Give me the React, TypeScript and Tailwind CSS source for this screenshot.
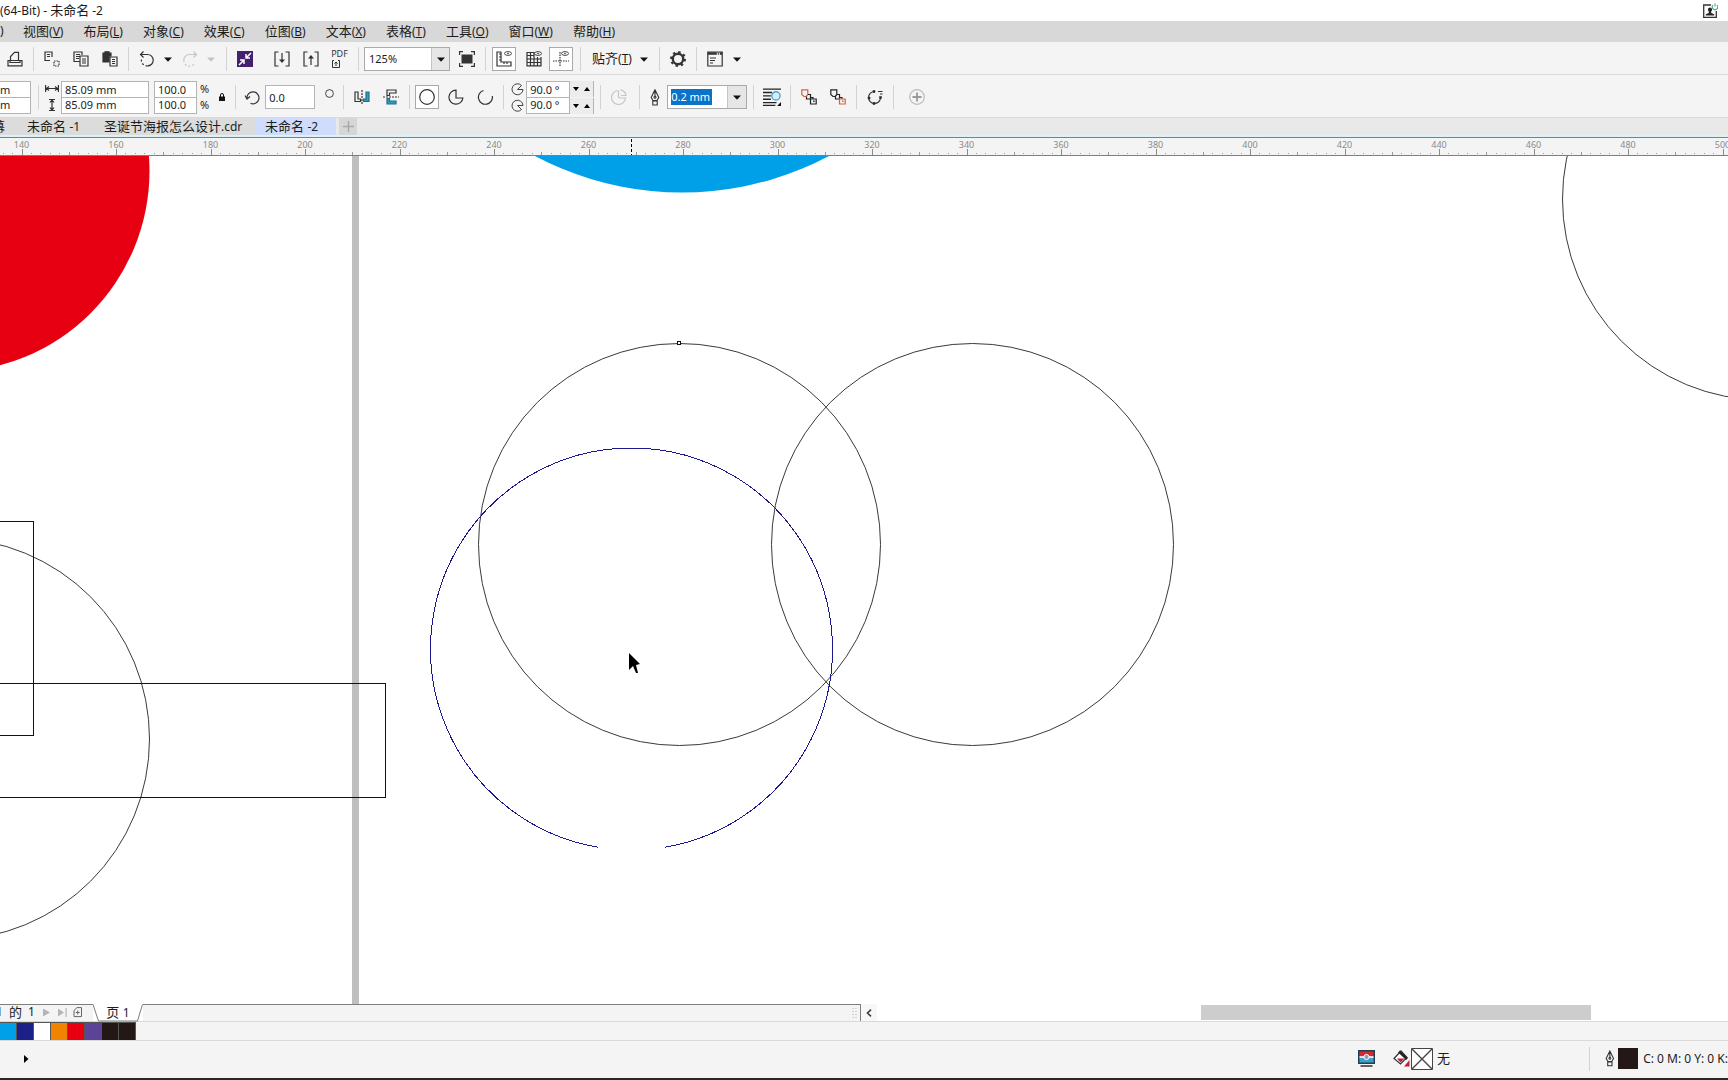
/**
 * Vector drawing workspace: title, menus, toolbars, ruler, canvas, page tabs, palette, status.
 */

import type React from "react";

// ─── Shared bits ──────────────────────────────────────────────────────────────
const Sep: React.FC = () => (
  <div className="w-2 h-6 shrink-0 flex justify-center">
    <div className="w-px h-full bg-[#d2d2d2]" />
  </div>
);

const Caret: React.FC<{ muted?: boolean }> = ({ muted }) => (
  <svg width="8" height="5" viewBox="0 0 8 5" className={muted ? "text-[#c4c4c4]" : "text-[#111]"}>
    <path d="M0 0.5h8L4 4.8z" fill="currentColor" />
  </svg>
);

const CaretButton: React.FC<{ label: string; muted?: boolean }> = ({ label, muted }) => (
  <button type="button" aria-label={label} className="w-[14px] h-6 shrink-0 flex items-center justify-center">
    <Caret muted={muted} />
  </button>
);

interface ToolProps {
  label: string;
  boxed?: boolean;
  muted?: boolean;
  size?: number;
  children: React.ReactNode;
}

const Tool: React.FC<ToolProps> = ({ label, boxed, muted, size = 16, children }) => (
  <button
    type="button"
    aria-label={label}
    className={`h-6 shrink-0 flex items-center justify-center ${
      boxed ? "w-6 bg-white border border-[#a9a9a9]" : "w-[29px]"
    } ${muted ? "text-[#c6c6c6]" : "text-[#333]"}`}
  >
    <svg
      width={size}
      height={size}
      viewBox="0 0 16 16"
      fill="none"
      stroke="currentColor"
      strokeWidth="1.2"
      className="shrink-0"
    >
      {children}
    </svg>
  </button>
);

const EyeMark: React.FC = () => (
  <>
    <ellipse cx="12" cy="2.5" rx="3.5" ry="1.9" strokeWidth="0.9" />
    <circle cx="12" cy="2.5" r="0.8" fill="currentColor" stroke="none" />
  </>
);

const PenIcon: React.FC = () => (
  <svg width="10" height="17" viewBox="0 0 10 17" fill="none" stroke="#333" strokeWidth="1.1">
    <path d="M5 0.8 1.2 8.5 3 11.5h4l1.8-3zM5 1v6.5M2.8 12h4.4v4H2.8z" />
    <circle cx="5" cy="8.3" r="1" />
  </svg>
);

// ─── Title + menu ─────────────────────────────────────────────────────────────
const MENUS = [
  ["视图", "V"],
  ["布局", "L"],
  ["对象", "C"],
  ["效果", "C"],
  ["位图", "B"],
  ["文本", "X"],
  ["表格", "T"],
  ["工具", "O"],
  ["窗口", "W"],
  ["帮助", "H"],
];

const TitleBar: React.FC = () => (
  <header className="h-[21px] shrink-0 flex items-center justify-between bg-white pr-[10px]">
    <h1 className="whitespace-nowrap text-[13px]">
      <span className="text-xs">(64-Bit) - </span>未命名<span className="text-xs"> -2</span>
    </h1>
    <button type="button" aria-label="账户" className="flex">
      <svg width="16" height="16" viewBox="0 0 16 16" fill="none">
        <path d="M9 2H1.7v12.3h12.6V8" stroke="#333" strokeWidth="1.3" />
        <path d="M8 4.5a2.2 2.2 0 0 1 1.2 4v1.6l3 1.2v1.3H3.8v-1.3l3-1.2V8.5A2.2 2.2 0 0 1 8 4.5z" fill="#222" />
        <path d="M11 2.2a2.7 2.7 0 1 0 4 0M13 0.5v3" stroke="#4fa37c" strokeWidth="1.1" />
      </svg>
    </button>
  </header>
);

const MenuBar: React.FC = () => (
  <nav className="h-[21px] shrink-0 flex items-center gap-5 pb-0.5 bg-[#d8d8d8] whitespace-nowrap">
    <span className="w-[3px] text-xs">)</span>
    {MENUS.map(([name, key]) => (
      <button type="button" key={name} className="text-[13px] leading-5">
        {name}
        <span className="text-xs">
          (<span className="underline">{key}</span>)
        </span>
      </button>
    ))}
  </nav>
);

// ─── Standard toolbar ─────────────────────────────────────────────────────────
const StandardBar: React.FC = () => (
  <div className="h-[33px] shrink-0 flex items-center pt-0.5 bg-[#f4f4f4] border-b border-[#d9d9d9]">
    <Tool label="打印">
      <path d="M3.5 9V5.5l4-4.2h4V9M1 9.5h14v5.3H1zM3 9.5v2h10v-2" />
    </Tool>
    <Sep />
    <Tool label="剪切">
      <path d="M6 9.5H1V1h7v5M3 3.5h3M3 5.5h3" />
      <path d="M10 10h5v5h-5z" strokeDasharray="1.5 1" />
    </Tool>
    <Tool label="复制">
      <path d="M7 10.5H1V1h8v3M3 3.5h4M3 5.5h4M3 7.5h3M7 5h8v10H7zM9 8h4M9 10h4M9 12h4" />
    </Tool>
    <Tool label="粘贴">
      <path d="M7 11H1V2h2V0.8h4V2h2v3H7z" fill="currentColor" />
      <path d="M8 6h7v9H8zM10 8.5h3M10 10.5h3M10 12.5h3" />
    </Tool>
    <Sep />
    <Tool label="撤销">
      <path d="M4.500 0.500 1.500 3.500l3 3M2 3.500h6.500a5.700 5.700 0 0 1 0 11.400" />
      <path d="M8.500 14.900A5.700 5.700 0 0 1 2.500 8" strokeDasharray="2 2" />
    </Tool>
    <CaretButton label="撤销列表" />
    <Tool label="重做" muted>
      <path d="M11.500 0.500l3 3-3 3M14 3.500H7.500a5.700 5.700 0 0 0-5.700 5.700" />
      <path d="M1.800 9.200A5.700 5.700 0 0 0 12 13" strokeDasharray="2 2" />
    </Tool>
    <CaretButton label="重做列表" muted />
    <span className="w-1" />
    <Sep />
    <Tool label="搜索内容">
      <path d="M0 0h16v16H0z" fill="#45206f" stroke="none" />
      <path d="M14 2 9.500 6.500M9 3v4h4M2 14l4.500-4.500M7 13V9H3" stroke="#fff" strokeWidth="1.500" />
    </Tool>
    <span className="w-2" />
    <Tool label="导入">
      <path d="M4.500 1H1v14h3.500M11.500 1H15v14h-3.500M8 2v9" />
      <path d="M5 8.500h6L8 12z" fill="currentColor" stroke="none" />
    </Tool>
    <Tool label="导出">
      <path d="M4.500 1H1v14h3.500M11.500 1H15v14h-3.500M8 5v9" />
      <path d="M5 7.500h6L8 4z" fill="currentColor" stroke="none" />
    </Tool>
    <button type="button" className="w-[29px] h-6 shrink-0 flex flex-col items-center pt-0.5 text-[#333]">
      <span className="text-[9px] leading-[10px]">PDF</span>
      <svg width="8" height="8" viewBox="0 0 8 8" fill="none" stroke="currentColor" className="mr-2 mt-px">
        <path d="M2 0.500H0.500v7h7v-7H6M4 6V2M2.500 3.500 4 2l1.500 1.500" />
      </svg>
    </button>
    <Sep />
    <div className="relative flex shrink-0 mx-[2px]">
      <select
        aria-label="缩放级别"
        className="appearance-none w-[86px] h-6 pl-1 bg-white border border-[#a9a9a9] text-[11px] leading-5"
      >
        <option>125%</option>
      </select>
      <span className="absolute right-px inset-y-px w-[18px] bg-[#e6e6e6] border-l border-[#c4c4c4] flex items-center justify-center pointer-events-none">
        <Caret />
      </span>
    </div>
    <Tool label="全屏预览">
      <path d="M0.600 4V0.600H4M12 0.600h3.400V4M15.400 12v3.400H12M4 15.400H0.600V12" />
      <path d="M2.500 3.500h11v9h-11z" fill="currentColor" stroke="none" />
    </Tool>
    <Sep />
    <div className="flex items-center gap-px mx-[3px]">
      <Tool label="显示标尺" boxed>
        <path d="M1 1v14h14v-4H5V1zM3 3h2M3 6h2M3 9h2M8 13v-2M11 13v-2" />
        <EyeMark />
      </Tool>
      <span className="w-px" />
      <Tool label="显示网格">
        <path d="M1 1v14M4.500 1v14M8 1v14M11.500 6v9M15 6v9M0.500 1.500H8M0.500 4.500H8M0.500 8h15M0.500 11.500h15M0.500 14.800h15" />
        <EyeMark />
      </Tool>
      <Tool label="显示辅助线" boxed>
        <path d="M0 10h16M7 1v15" strokeDasharray="1.500 1" />
        <EyeMark />
      </Tool>
    </div>
    <Sep />
    <button type="button" className="flex items-center gap-2 pl-2 pr-2 text-[13px] whitespace-nowrap">
      <span>
        贴齐
        <span className="text-xs">
          (<span className="underline">T</span>)
        </span>
      </span>
      <Caret />
    </button>
    <Sep />
    <Tool label="选项">
      <circle cx="8" cy="8" r="5.200" strokeWidth="2.400" />
      <circle cx="8" cy="8" r="7" strokeWidth="2" strokeDasharray="2.400 3.100" />
    </Tool>
    <Sep />
    <Tool label="应用程序启动器">
      <path d="M0.800 1h14.400v14H0.800zM3 7h6M3 9.500h5M3 12h3" />
      <path d="M0.800 2.500h14.400" strokeWidth="2.400" strokeDasharray="9 1 1 1" />
    </Tool>
    <CaretButton label="启动器列表" />
  </div>
);

// ─── Property bar ─────────────────────────────────────────────────────────────
interface FieldProps {
  label: string;
  value: string;
  className: string;
}

const Field: React.FC<FieldProps> = ({ label, value, className }) => (
  <input aria-label={label} defaultValue={value} className={`bg-white border border-[#b4b4b4] text-[11px] ${className}`} />
);

const Spinner: React.FC<{ label: string }> = ({ label }) => (
  <div className="flex h-4 w-6 bg-[#ececec] border-r border-[#b4b4b4]">
    <button type="button" aria-label={`${label}减小`} className="w-3 flex items-center justify-center">
      <svg width="6" height="4" viewBox="0 0 6 4">
        <path d="M0 0h6L3 4z" />
      </svg>
    </button>
    <button type="button" aria-label={`${label}增大`} className="w-3 flex items-center justify-center">
      <svg width="6" height="4" viewBox="0 0 6 4">
        <path d="M0 4h6L3 0z" />
      </svg>
    </button>
  </div>
);

const PropertyBar: React.FC = () => (
  <div className="h-[43px] shrink-0 flex items-center pt-0.5 bg-[#f4f4f4] border-b border-[#d9d9d9]">
    <div className="flex flex-col">
      <Field label="X 位置" value="m" className="w-[31px] h-[17px] border-l-0" />
      <Field label="Y 位置" value="m" className="w-[31px] h-4 border-l-0 border-t-0" />
    </div>
    <span className="w-[3px]" />
    <Sep />
    <svg width="14" height="32" viewBox="0 0 14 32" fill="none" stroke="#333" strokeWidth="1.2" className="ml-[3px] mr-[2px]">
      <path d="M0.600 4v7M13.400 4v7M1 7.500h12M4 5.500l-2.500 2L4 9.500M10 5.500l2.500 2-2.500 2" />
      <path d="M4 18.500h6M4 29.500h6M7 18.500v11M5 21.500l2-2.500 2 2.500M5 26.500l2 2.500 2-2.500" />
    </svg>
    <div className="flex flex-col">
      <Field label="对象宽度" value="85.09 mm" className="w-[88px] h-[17px] pl-[3px]" />
      <Field label="对象高度" value="85.09 mm" className="w-[88px] h-4 pl-[3px] border-t-0" />
    </div>
    <div className="flex flex-col ml-[5px]">
      <Field label="水平缩放" value="100.0" className="w-[43px] h-[17px] pl-[3px]" />
      <Field label="垂直缩放" value="100.0" className="w-[43px] h-4 pl-[3px] border-t-0" />
    </div>
    <div className="flex flex-col ml-[3px] text-[11px] leading-4">
      <span>%</span>
      <span>%</span>
    </div>
    <button type="button" aria-label="锁定比率" className="w-[19px] h-6 ml-[3px] flex items-center justify-center">
      <svg width="6" height="8" viewBox="0 0 6 8">
        <path d="M1.500 4V2a1.500 1.500 0 0 1 3 0v2" fill="none" stroke="#111" />
        <path d="M0 3.500h6V8H0z" fill="#111" />
      </svg>
    </button>
    <Sep />
    <div className="w-[26px] flex justify-center">
      <Tool label="旋转">
        <path d="M1 6.500 3 10l3-2.500M3 9.500a6 6 0 1 1 3.500 4.800" />
      </Tool>
    </div>
    <Field label="旋转角度" value="0.0" className="w-[50px] h-6 pl-[3px]" />
    <span className="w-6 h-6 flex justify-center pt-1">
      <svg width="9" height="9" viewBox="0 0 9 9" fill="none" stroke="#444" className="ml-1">
        <circle cx="4.500" cy="4.500" r="3.900" />
      </svg>
    </span>
    <Sep />
    <Tool label="水平镜像">
      <path d="M1 3v9.500h5.500V10H4V3z" />
      <path d="M8 1v14" strokeDasharray="2 1" />
      <path d="M15 3v9.500H9.500V10H12V3z" fill="#2f9cc0" stroke="#236f8a" />
    </Tool>
    <Tool label="垂直镜像">
      <path d="M13 1H4v5.500h2.500v-2.500H13z" />
      <path d="M0 8h16" strokeDasharray="2 1" />
      <path d="M13 15H4V9.500h2.500V12H13z" fill="#2f9cc0" stroke="#236f8a" />
    </Tool>
    <Sep />
    <span className="w-[2px]" />
    <Tool label="椭圆形" boxed>
      <circle cx="8" cy="8" r="7.300" />
    </Tool>
    <span className="w-[2px]" />
    <Tool label="饼形">
      <path d="M8 1.200A7 7 0 1 0 14.900 9H8z" />
    </Tool>
    <Tool label="弧形">
      <path d="M6.500 1.500a7 7 0 1 0 8.800 5.500" />
    </Tool>
    <Sep />
    <div className="flex flex-col gap-[3px] ml-1 mr-[2px]">
      <svg width="13" height="13" viewBox="0 0 13 13" fill="none" stroke="#444">
        <path d="M10.500 2.500A5.500 5.500 0 1 0 12 6.500H6.500l4-4" />
      </svg>
      <svg width="13" height="13" viewBox="0 0 13 13" fill="none" stroke="#444">
        <path d="M10.500 10.500A5.500 5.500 0 1 1 12 6.500H6.500l4 4" />
      </svg>
    </div>
    <div className="flex flex-col">
      <div className="flex">
        <Field label="起始角度" value="90.0 °" className="w-[44px] h-[17px] pl-[3px]" />
        <Spinner label="起始角度" />
      </div>
      <div className="flex">
        <Field label="结束角度" value="90.0 °" className="w-[44px] h-4 pl-[3px] border-t-0" />
        <Spinner label="结束角度" />
      </div>
    </div>
    <span className="w-[2px]" />
    <Sep />
    <Tool label="更改方向" muted>
      <path d="M7 1.500a7 7 0 1 0 7.500 7.500H8M7.500 1.500V9M9.500 0.800A6.500 6.500 0 0 1 15 6.500h-5" />
    </Tool>
    <span className="w-[2px]" />
    <Sep />
    <span className="w-6 flex justify-center">
      <PenIcon />
    </span>
    <div className="flex h-6 w-20 shrink-0 bg-white border border-[#a9a9a9] items-center pl-[3px]">
      <input
        aria-label="轮廓宽度"
        defaultValue="0.2 mm"
        className="w-[41px] h-4 bg-[#0b72c9] text-white text-[11px]"
      />
      <button
        type="button"
        aria-label="轮廓宽度列表"
        className="ml-auto w-[19px] h-full bg-[#e6e6e6] border-l border-[#c4c4c4] flex items-center justify-center"
      >
        <Caret />
      </button>
    </div>
    <span className="w-[2px]" />
    <Sep />
    <Tool label="文本换行" size={18}>
      <path d="M0 1h16M0 4h8M0 7h7M0 10h7M0 13h12M0 15.500h11" stroke="#222" />
      <circle cx="11.500" cy="7" r="3.700" fill="#d5eefa" stroke="#4aa3d0" />
      <path d="M16.500 12v4.500H12z" fill="#111" stroke="none" />
    </Tool>
    <Sep />
    <Tool label="到图层前面">
      <path d="M0.800 0.800h6v5L5 7.500H3L0.800 5.500z" stroke="#d9623b" />
      <path d="M7 5.500h2.500v3M5.500 7.500V10h4V8.500H12V10M9.500 10h5.700v5H9.500zM12 12h1v1" stroke="#222" />
    </Tool>
    <Tool label="到图层后面">
      <path d="M0.800 0.800h6v5L5 7.500H3L0.800 5.500zM7 5.500h2.500v3M5.500 7.500V10h4V8.500H12V10" stroke="#222" />
      <path d="M9.500 10h5.700v5H9.500zM12 12h1v1" stroke="#d9623b" />
    </Tool>
    <Sep />
    <Tool label="转换为曲线">
      <path d="M11 2.500h4.500M13 5h2.500M7 2.500a6 6 0 1 0 6.500 7" />
      <path d="M6 1.500h2v2H6zM1 8h2v2H1zM6 13.500h2v2H6zM12.500 7.500h2v2h-2z" fill="#222" strokeWidth="0.600" />
    </Tool>
    <Sep />
    <span className="w-[5px]" />
    <Tool label="添加" muted>
      <circle cx="8" cy="8" r="7.300" stroke="#bbb" />
      <path d="M8 3.500v9M3.500 8h9" stroke="#999" strokeWidth="1.800" />
    </Tool>
  </div>
);

// ─── Document tabs ────────────────────────────────────────────────────────────
const DocumentTabs: React.FC = () => (
  <div className="h-5 shrink-0 bg-[#d9f3f8] border-b border-[#3f95b5]">
    <div className="h-[17px] flex bg-[#e9e9e9] text-[13px] leading-4 whitespace-nowrap">
      <button type="button" className="w-[18px] bg-[#dcdcdc] overflow-hidden flex justify-start">
        <span className="-ml-2">幕</span>
      </button>
      <button type="button" className="w-[78px] bg-[#dcdcdc] pl-[9px] text-left">
        未命名 <span className="text-xs">-1</span>
      </button>
      <button type="button" className="w-[160px] bg-[#dcdcdc] pl-2 text-left">
        圣诞节海报怎么设计<span className="text-xs">.cdr</span>
      </button>
      <button type="button" className="w-20 bg-[#cfdcfb] pl-[9px] text-left">
        未命名 <span className="text-xs">-2</span>
      </button>
      <button
        type="button"
        aria-label="新建文档"
        className="w-[18px] ml-[3px] bg-[#d6d6d6] flex items-center justify-center"
      >
        <svg width="11" height="11" viewBox="0 0 11 11" stroke="#aaa" strokeWidth="1.500">
          <path d="M5.500 0v11M0 5.500h11" />
        </svg>
      </button>
    </div>
  </div>
);

// ─── Ruler ────────────────────────────────────────────────────────────────────
const RULER_START = 21.5;
const RULER_STEP = 94.5;
const MAJORS = Array.from({ length: 19 }, (_, i) => ({ x: RULER_START + i * RULER_STEP, value: 140 + i * 20 }));
const MINORS = Array.from({ length: 183 }, (_, i) => i - 2);

const Ruler: React.FC = () => (
  <svg className="block w-full h-[18px] shrink-0 bg-[#f4f4f4]" shapeRendering="crispEdges">
    <path d="M0 17.500h3000" stroke="#7d7d7d" />
    {MINORS.map((i) => (
      <rect
        key={i}
        x={RULER_START + (i * RULER_STEP) / 10}
        y={i % 5 === 0 ? 14 : 15}
        width="1"
        height={i % 5 === 0 ? 3 : 1}
        fill="#9a9a9a"
      />
    ))}
    {MAJORS.map((m) => (
      <g key={m.value}>
        <rect x={m.x} y="11" width="1" height="6" fill="#8a8a8a" />
        <text x={m.x} y="10" textAnchor="middle" fontSize="9" fill="#8a8a8a">
          {m.value}
        </text>
      </g>
    ))}
    <path d="M631.500 1v16" stroke="#000" strokeDasharray="3 2" />
  </svg>
);

// ─── Drawing ──────────────────────────────────────────────────────────────────
const Drawing: React.FC = () => (
  <svg className="block w-full h-full" fill="none" stroke="#3a3a3a">
    <g transform="translate(0 -156)">
      <rect x="352" y="150" width="7" height="2000" fill="#bfbfbf" stroke="none" />
      <circle cx="-51.500" cy="171" r="201" fill="#e60012" stroke="none" />
      <circle cx="682" cy="-122" r="314.500" fill="#00a0e9" stroke="none" />
      <circle cx="1763.500" cy="199" r="201" />
      <circle cx="-51.500" cy="739" r="201" />
      <rect x="-20.500" y="521.500" width="54" height="214" stroke="#111" />
      <rect x="-20.500" y="683.500" width="406" height="114" stroke="#111" />
      <circle cx="679.500" cy="544.500" r="201" />
      <circle cx="972.500" cy="544.500" r="201" />
      {/* arc being dragged, open at the bottom */}
      <path d="M598 847.200A201 201 0 1 1 665 847.200" stroke="#1a1a8c" shapeRendering="crispEdges" />
      <rect x="677.500" y="341.500" width="3" height="3" stroke="#111" fill="#fff" shapeRendering="crispEdges" />
      <path d="M629 653v17l4-4 3 7h2l-2-8 4-1z" fill="#000" stroke="none" />
    </g>
  </svg>
);

// ─── Page tabs, palette, status ───────────────────────────────────────────────
const PageTabs: React.FC = () => (
  <div className="h-[18px] shrink-0 flex bg-white border-b border-[#d9d9d9]">
    <div className="w-[93px] bg-[#f4f4f4] border-t border-[#7d7d7d] flex items-center overflow-hidden text-xs leading-4 pb-0.5 whitespace-nowrap">
      <span className="-ml-1">1</span>
      <span className="ml-[6px] text-[13px]">的</span>
      <span className="ml-[6px]">1</span>
      <svg width="40" height="11" viewBox="0 0 40 11" className="ml-2" fill="#b5b5b5">
        <path d="M0 1.500 7 5.500 0 9.500zM15 1.500l6 4-6 4zM22.500 1h1.200v9h-1.200z" />
        <path d="M34 0.600h4.500v9H31V3.500zM34.700 3.500v4M32.700 5.500h4" fill="none" stroke="#666" />
      </svg>
    </div>
    <button type="button" className="relative w-[50px] text-[13px] leading-4 pb-0.5">
      <svg width="50" height="18" viewBox="0 0 50 18" className="absolute inset-0" stroke="#7d7d7d">
        <path d="M0 0.500 5.500 17h39L49.500 0.500" fill="#fff" />
      </svg>
      <span className="relative">
        页 <span className="text-xs">1</span>
      </span>
    </button>
    <div className="w-[718px] bg-[#f4f4f4] border-t border-r border-[#7d7d7d] flex justify-end items-center pr-[2px]">
      <svg width="6" height="10" viewBox="0 0 6 10" stroke="#b0b0b0" strokeDasharray="1 2">
        <path d="M1 0v10M4 0v10" />
      </svg>
    </div>
    <button type="button" aria-label="向左滚动" className="w-4 bg-[#f7f7f7] flex items-center justify-center">
      <svg width="6" height="8" viewBox="0 0 6 8" fill="none" stroke="#444" strokeWidth="1.700">
        <path d="M5 0.600 1.500 4 5 7.400" />
      </svg>
    </button>
    <div className="flex-1 py-px">
      <div className="h-[15px] w-[390px] ml-[324px] bg-[#cdcdcd]" />
    </div>
  </div>
);

const SWATCHES = [
  { name: "青", bg: "bg-[#00a0e9]" },
  { name: "蓝", bg: "bg-[#1d2088]" },
  { name: "白", bg: "bg-white" },
  { name: "橙", bg: "bg-[#f08300]" },
  { name: "红", bg: "bg-[#e60012]" },
  { name: "紫", bg: "bg-[#5b4498]" },
  { name: "黑", bg: "bg-[#231815]" },
  { name: "深黑", bg: "bg-[#231815]" },
];

const Palette: React.FC = () => (
  <div className="h-[19px] shrink-0 flex bg-[#f4f4f4] border-b border-[#d9d9d9]">
    {SWATCHES.map((s) => (
      <button
        type="button"
        key={s.name}
        aria-label={s.name}
        className={`w-[17px] h-[18px] border-r border-t border-[#555] ${s.bg}`}
      />
    ))}
  </div>
);

const StatusBar: React.FC = () => (
  <footer className="h-[39px] shrink-0 flex items-center pb-0.5 bg-[#f4f4f4] border-b-2 border-[#2b2626] text-[13px] whitespace-nowrap">
    <button type="button" aria-label="展开" className="ml-6">
      <svg width="5" height="8" viewBox="0 0 5 8" className="block">
        <path d="M0 0l4.500 4L0 8z" />
      </svg>
    </button>
    <svg width="17" height="17" viewBox="0 0 17 17" className="ml-auto">
      <path d="M0 0h17v14H0z" fill="#2a3d50" />
      <path d="M1.500 1.500h14v5.500h-14z" fill="#d02c35" />
      <path d="M1.500 7h14v5.500h-14z" fill="#3aa0d0" />
      <path d="M1.500 7h14" stroke="#fff" strokeWidth="1.600" />
      <circle cx="8.500" cy="7" r="2.600" fill="#8a9fb4" stroke="#fff" />
      <path d="M2.500 16h12" stroke="#222" strokeWidth="1.400" />
    </svg>
    <div className="w-[214px] flex items-center pl-[18px]">
      <svg width="17" height="17" viewBox="0 0 17 17">
        <path d="M8 1 14 7.500 7.500 14 1 8.500z" fill="#fff" stroke="#333" strokeWidth="1.200" />
        <path d="M6 1.500 14 9" stroke="#222" strokeWidth="2.500" />
        <path d="M4 8.500h7.500L7.500 12.500z" fill="#c41f3a" />
        <path d="M16.500 10v6.500H11z" fill="#c41f3a" />
      </svg>
      <svg width="22" height="22" viewBox="0 0 22 22" className="ml-px mr-1" stroke="#444" fill="#fff">
        <path d="M0.500 0.500h21v21h-21z" />
        <path d="M1 1l20 20M21 1 1 21" strokeWidth="1.400" />
      </svg>
      无
    </div>
    <div className="w-[139px] h-6 flex items-center border-l border-[#d2d2d2] pl-[15px]">
      <PenIcon />
      <span className="w-[21px] h-[21px] ml-[3px] mr-[5px] bg-[#231815]" />
      <span className="text-xs">C: 0 M: 0 Y: 0 K:</span>
    </div>
  </footer>
);

export default function App() {
  return (
    <div className="h-screen flex flex-col overflow-hidden bg-white text-[#1c1c1c] font-['Noto_Sans','Noto_Sans_CJK_SC',sans-serif]">
      <TitleBar />
      <MenuBar />
      <StandardBar />
      <PropertyBar />
      <DocumentTabs />
      <Ruler />
      <main className="flex-1 min-h-0">
        <Drawing />
      </main>
      <PageTabs />
      <Palette />
      <StatusBar />
    </div>
  );
}
